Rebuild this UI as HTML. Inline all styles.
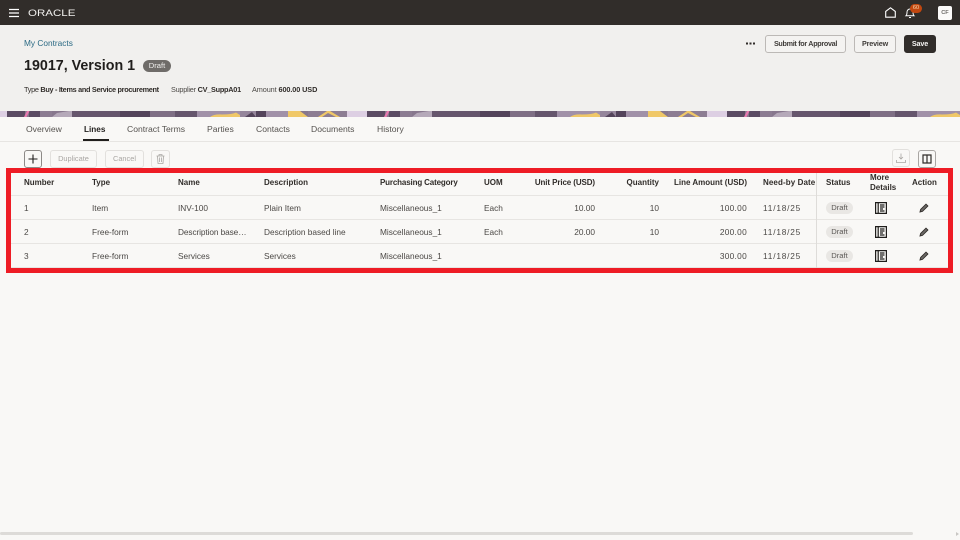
<!DOCTYPE html>
<html lang="en">
<head>
<meta charset="utf-8">
<title>19017, Version 1</title>
<style>
html,body{margin:0;padding:0;width:960px;height:540px;overflow:hidden;background:#f9f8f6}
body{position:relative;font-family:"Liberation Sans",sans-serif;color:#312d2a}
#w{position:absolute;left:0;top:0;width:960px;height:540px;filter:blur(.3px)}
.t{position:absolute;font-size:8.3px;line-height:12px;white-space:nowrap;color:#4b4845}
.h{font-weight:bold;color:#312d2a;font-size:8px}
.r{text-align:right}
.dt{letter-spacing:.8px}
.b{position:absolute;box-sizing:border-box;border:1px solid #bcb9b6;border-radius:3px;background:#f4f3f1;text-align:center;font-size:7.2px;letter-spacing:-.15px;font-weight:bold;color:#3f3c39;white-space:nowrap}
.d{border-color:#e2e0dd;background:#f9f8f6;color:#a9a6a3;font-weight:normal;letter-spacing:0}
.line{position:absolute;background:#e7e5e2;height:1px}
.chip{position:absolute;left:826px;width:27px;height:12px;border-radius:6px;background:#e9e7e4;font-size:7.6px;line-height:12px;text-align:center;color:#5c5956}
.tab{position:absolute;top:123px;font-size:8.6px;line-height:12px;color:#55524f;white-space:nowrap}
svg{position:absolute;overflow:visible}
</style>
</head>
<body>
<div id="w">
<div style="position:absolute;left:0;top:0;width:960px;height:25px;background:#312d2a"></div>
<svg style="left:9px;top:9px" width="11" height="8" viewBox="0 0 11 8"><path d="M0 .5h10M0 4h10M0 7.5h10" stroke="#fff" stroke-width="1.2"/></svg>
<div style="position:absolute;left:28px;top:7px;font-size:9px;line-height:12px;color:#f2f1ef;transform:scaleX(1.28);transform-origin:left;white-space:nowrap">ORACLE</div>
<svg style="left:885px;top:7px" width="11" height="11" viewBox="0 0 11 11"><path d="M.7 10.2V4.4L5.5.8l4.8 3.6v5.8z" fill="none" stroke="#fff" stroke-width="1.1"/></svg>
<svg style="left:905px;top:7px" width="10" height="12" viewBox="0 0 10 12"><path d="M1 8.700c1-1 1-2 1-3.700 0-1.700 1.400-3 3-3s3 1.300 3 3c0 1.700 0 2.700 1 3.700zM4 10.500h2" fill="none" stroke="#fff" stroke-width="1"/></svg>
<div style="position:absolute;left:910px;top:4px;width:12px;height:9px;border-radius:5px;background:#c2470f;color:#f7d8b0;font-size:5.6px;line-height:9px;text-align:center">60</div>
<div style="position:absolute;left:938px;top:6px;width:14px;height:14px;border-radius:2px;background:#fbfaf9;color:#6d6a67;font-size:5.6px;line-height:14px;text-align:center;font-weight:bold">CF</div>

<div style="position:absolute;left:0;top:25px;width:960px;height:86px;background:#f1f0ee"></div>
<div class="t" style="left:24px;top:37px;color:#2b6a84;font-size:8.3px">My Contracts</div>
<div style="position:absolute;left:24px;top:57px;font-size:15.2px;line-height:18px;font-weight:bold;color:#201e1c;white-space:nowrap;transform:scaleX(.94);transform-origin:left">19017, Version 1</div>
<div style="position:absolute;left:143px;top:60px;width:28px;height:12px;border-radius:6px;background:#6f6c69;color:#f1f0ee;font-size:7.6px;line-height:12px;text-align:center">Draft</div>
<div class="t" style="left:24px;top:84px;font-size:7.3px;letter-spacing:-.3px;color:#312d2a">Type <span style="font-weight:bold">Buy - Items and Service procurement</span></div>
<div class="t" style="left:171px;top:84px;font-size:7.3px;letter-spacing:-.25px;color:#4b4845">Supplier <span style="font-weight:bold;color:#312d2a">CV_SuppA01</span></div>
<div class="t" style="left:252px;top:84px;font-size:7.3px;letter-spacing:-.1px;color:#4b4845">Amount <span style="font-weight:bold;color:#312d2a">600.00 USD</span></div>

<svg style="left:746px;top:42px" width="9" height="3" viewBox="0 0 9 3"><path d="M0 .5h2v2H0zM3.500 .5h2v2h-2zM7 .5h2v2H7z" fill="#312d2a"/></svg>
<div class="b" style="left:765px;top:35px;width:81px;height:18px;line-height:16px;letter-spacing:-.3px">Submit for Approval</div>
<div class="b" style="left:854px;top:35px;width:42px;height:18px;line-height:16px">Preview</div>
<div class="b" style="left:904px;top:35px;width:32px;height:18px;line-height:16px;background:#312d2a;border-color:#312d2a;color:#f5f4f2">Save</div>

<svg style="left:0;top:111px" width="960" height="6" viewBox="0 0 960 6">
<defs><pattern id="p" x="0" y="0" width="360" height="6" patternUnits="userSpaceOnUse">
<rect width="360" height="6" fill="#87778d"/>
<rect x="0" width="7" height="6" fill="#ddcfe3"/>
<rect x="347" width="13" height="6" fill="#ddcfe3"/>
<rect x="7" width="18" height="6" fill="#5b4b63"/>
<rect x="29" width="11" height="6" fill="#5b4b63"/>
<path d="M27 0h2.500l-3 6H24z" fill="#e87ab0"/>
<rect x="40" width="12" height="6" fill="#8c7c92"/>
<path d="M52 6l5-4 12-2h3v6z" fill="#b5a9b9"/>
<rect x="72" width="125" height="6" fill="#66566d"/>
<rect x="120" width="30" height="6" fill="#54445b"/>
<rect x="150" width="25" height="6" fill="#7f6f85"/>
<rect x="197" width="43" height="6" fill="#a191a8"/>
<path d="M210 6Q214 3 222 3.500Q232 3.500 236 1.500Q240 4 243 6z" fill="#f0c868"/>
<rect x="240" width="26" height="6" fill="#95859b"/>
<path d="M245 6l7-5 4 5z" fill="#54445b"/>
<rect x="256" width="10" height="6" fill="#54445b"/>
<rect x="266" width="22" height="6" fill="#a191a8"/>
<path d="M288 0h12l8 6h-20z" fill="#f0c868"/>
<rect x="308" width="39" height="6" fill="#8d7d93"/>
<path d="M318 6l9-6h3l10 6h-4l-8-4-6 4z" fill="#f0c868"/>
</pattern></defs>
<rect width="960" height="6" fill="url(#p)"/>
</svg>

<div class="tab" style="left:26px">Overview</div>
<div class="tab" style="left:84px;color:#201e1c;font-weight:bold;font-size:8.2px;top:123.500px">Lines</div>
<div style="position:absolute;left:83px;top:139px;width:26px;height:2px;background:#201e1c"></div>
<div class="tab" style="left:127px">Contract Terms</div>
<div class="tab" style="left:207px">Parties</div>
<div class="tab" style="left:256px">Contacts</div>
<div class="tab" style="left:311px">Documents</div>
<div class="tab" style="left:377px">History</div>
<div class="line" style="left:0;top:141px;width:960px"></div>

<div class="b" style="left:24px;top:150px;width:18px;height:18px;background:#f9f8f6;border-color:#8d8a87"></div>
<svg style="left:28px;top:154px" width="10" height="10" viewBox="0 0 10 10"><path d="M5 .5v9M.5 5h9" stroke="#201e1c" stroke-width="1.100"/></svg>
<div class="b d" style="left:50px;top:150px;width:47px;height:18px;line-height:16px;font-size:7.4px">Duplicate</div>
<div class="b d" style="left:105px;top:150px;width:39px;height:18px;line-height:16px;font-size:7.4px">Cancel</div>
<div class="b d" style="left:151px;top:150px;width:19px;height:18px"></div>
<svg style="left:156px;top:154px" width="9" height="10" viewBox="0 0 9 10"><path d="M.5 2h8M3 2V.7h3V2M1.500 2l.5 7.500h5L7.500 2M3.500 3.500v4.500M5.500 3.500v4.500" fill="none" stroke="#a9a6a3" stroke-width=".8"/></svg>
<div class="b d" style="left:892px;top:149px;width:18px;height:18px"></div>
<svg style="left:896px;top:153px" width="10" height="10" viewBox="0 0 10 10"><path d="M5 .5v5.500M3 4l2 2 2-2M.5 7v2.500h9V7" fill="none" stroke="#a9a6a3" stroke-width=".8"/></svg>
<div class="b" style="left:918px;top:150px;width:18px;height:18px;background:#f9f8f6;border-color:#a9a6a3"></div>
<svg style="left:922px;top:154px" width="10" height="10" viewBox="0 0 10 10"><path d="M1 1h8v8H1zM5 1v8" fill="none" stroke="#312d2a" stroke-width="1.200"/></svg>

<div class="line" style="left:11px;top:195px;width:937px"></div>
<div class="line" style="left:11px;top:219px;width:937px"></div>
<div class="line" style="left:11px;top:243px;width:937px"></div>
<div class="line" style="left:11px;top:267px;width:937px"></div>
<div style="position:absolute;left:816px;top:173px;width:1px;height:95px;background:#dedcd9"></div>

<div class="t h" style="left:24px;top:177px">Number</div>
<div class="t h" style="left:92px;top:177px">Type</div>
<div class="t h" style="left:178px;top:177px">Name</div>
<div class="t h" style="left:264px;top:177px">Description</div>
<div class="t h" style="left:380px;top:177px;letter-spacing:-.15px">Purchasing Category</div>
<div class="t h" style="left:484px;top:177px">UOM</div>
<div class="t h r" style="left:515px;width:80px;top:177px;letter-spacing:-.1px">Unit Price (USD)</div>
<div class="t h r" style="left:619px;width:40px;top:177px">Quantity</div>
<div class="t h r" style="left:657px;width:90px;top:177px">Line Amount (USD)</div>
<div class="t h" style="left:763px;top:177px;letter-spacing:.1px">Need-by Date</div>
<div class="t h" style="left:826px;top:177px">Status</div>
<div class="t h" style="left:870px;top:173px;line-height:10px">More<br>Details</div>
<div class="t h" style="left:912px;top:177px">Action</div>

<div class="t" style="left:24px;top:202px">1</div>
<div class="t" style="left:92px;top:202px">Item</div>
<div class="t" style="left:178px;top:202px">INV-100</div>
<div class="t" style="left:264px;top:202px">Plain Item</div>
<div class="t" style="left:380px;top:202px">Miscellaneous_1</div>
<div class="t" style="left:484px;top:202px">Each</div>
<div class="t r" style="left:535px;width:60px;top:202px">10.00</div>
<div class="t r" style="left:629px;width:30px;top:202px">10</div>
<div class="t r" style="left:687px;width:60px;top:202px;letter-spacing:.3px">100.00</div>
<div class="t dt" style="left:763px;top:202px">11/18/25</div>

<div class="t" style="left:24px;top:226px">2</div>
<div class="t" style="left:92px;top:226px">Free-form</div>
<div class="t" style="left:178px;top:226px;letter-spacing:-.1px">Description base…</div>
<div class="t" style="left:264px;top:226px">Description based line</div>
<div class="t" style="left:380px;top:226px">Miscellaneous_1</div>
<div class="t" style="left:484px;top:226px">Each</div>
<div class="t r" style="left:535px;width:60px;top:226px">20.00</div>
<div class="t r" style="left:629px;width:30px;top:226px">10</div>
<div class="t r" style="left:687px;width:60px;top:226px;letter-spacing:.3px">200.00</div>
<div class="t dt" style="left:763px;top:226px">11/18/25</div>

<div class="t" style="left:24px;top:250px">3</div>
<div class="t" style="left:92px;top:250px">Free-form</div>
<div class="t" style="left:178px;top:250px">Services</div>
<div class="t" style="left:264px;top:250px">Services</div>
<div class="t" style="left:380px;top:250px">Miscellaneous_1</div>
<div class="t r" style="left:687px;width:60px;top:250px;letter-spacing:.3px">300.00</div>
<div class="t dt" style="left:763px;top:250px">11/18/25</div>

<div class="chip" style="top:202px">Draft</div>
<div class="chip" style="top:226px">Draft</div>
<div class="chip" style="top:250px">Draft</div>

<svg style="left:875px;top:202px" width="12" height="12" viewBox="0 0 12 12"><path d="M.6.6h10.800v10.800H.6zM3.200.6v10.800M5 3h4.500M5 5h4.500M5 7h3M5 9h4.500" fill="none" stroke="#201e1c" stroke-width="1.200"/></svg>
<svg style="left:875px;top:226px" width="12" height="12" viewBox="0 0 12 12"><path d="M.6.6h10.800v10.800H.6zM3.200.6v10.800M5 3h4.500M5 5h4.500M5 7h3M5 9h4.500" fill="none" stroke="#201e1c" stroke-width="1.200"/></svg>
<svg style="left:875px;top:250px" width="12" height="12" viewBox="0 0 12 12"><path d="M.6.6h10.800v10.800H.6zM3.200.6v10.800M5 3h4.500M5 5h4.500M5 7h3M5 9h4.500" fill="none" stroke="#201e1c" stroke-width="1.200"/></svg>

<svg style="left:919px;top:203px" width="10" height="10" viewBox="0 0 10 10"><path d="M1 9l.6-2.500L7 1.100 8.900 3 3.500 8.400z" fill="#6d6a67" stroke="#312d2a" stroke-width=".9"/></svg>
<svg style="left:919px;top:227px" width="10" height="10" viewBox="0 0 10 10"><path d="M1 9l.6-2.500L7 1.100 8.900 3 3.500 8.400z" fill="#6d6a67" stroke="#312d2a" stroke-width=".9"/></svg>
<svg style="left:919px;top:251px" width="10" height="10" viewBox="0 0 10 10"><path d="M1 9l.6-2.500L7 1.100 8.900 3 3.500 8.400z" fill="#6d6a67" stroke="#312d2a" stroke-width=".9"/></svg>

<div style="position:absolute;left:6px;top:168px;width:947px;height:105px;box-sizing:border-box;border:5px solid #ee1c25"></div>

<div style="position:absolute;left:0;top:532px;width:913px;height:3px;background:#dddbd8;border-radius:2px"></div>
<div style="position:absolute;left:956px;top:532px;width:0;height:0;border-left:3px solid #c9c7c4;border-top:2px solid transparent;border-bottom:2px solid transparent"></div>
</div>
</body>
</html>
